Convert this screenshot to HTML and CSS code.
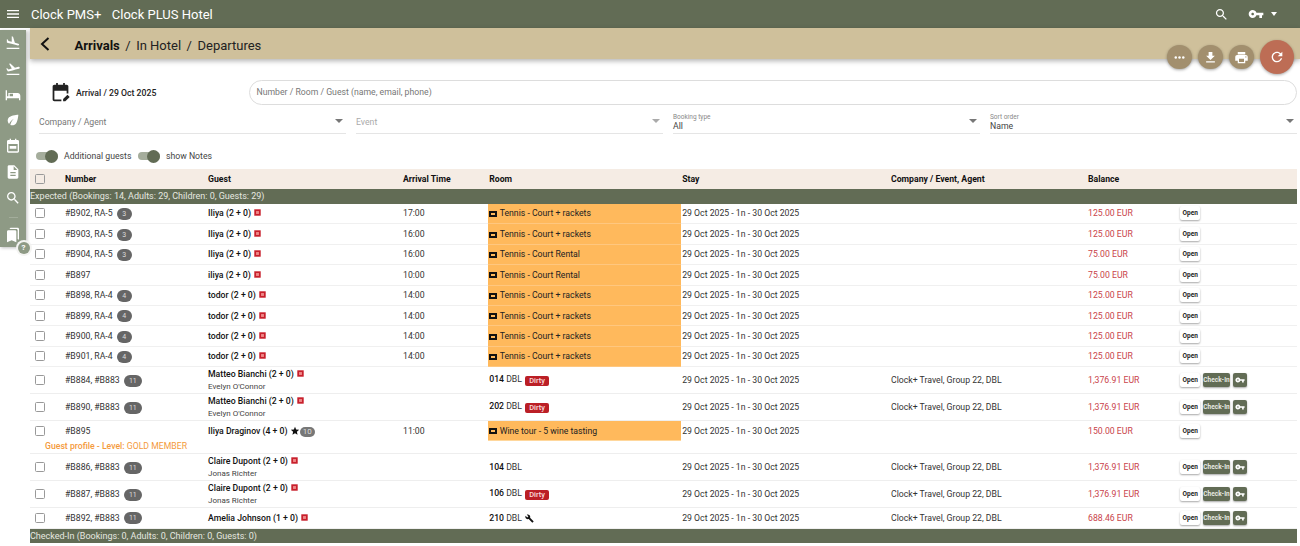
FILE: index.html
```html
<!DOCTYPE html>
<html lang="en">
<head>
<meta charset="utf-8">
<title>Clock PMS+ Arrivals</title>
<link rel="stylesheet" href="styles.css">
</head>
<body>
<svg class="defs" aria-hidden="true">
  <symbol id="i-takeoff" viewBox="0 0 24 24"><path d="M2.5 19h19v2h-19zm19.57-9.36c-.21-.8-1.04-1.28-1.84-1.06L14.92 10l-6.9-6.43-1.93.51 4.14 7.17-4.97 1.33-1.97-1.54-1.45.39 1.82 3.16.77 1.33 1.6-.43 5.31-1.42 4.35-1.16L21 11.49c.81-.23 1.28-1.05 1.07-1.85z"/></symbol>
  <symbol id="i-land" viewBox="0 0 24 24"><path d="M2.5 19h19v2h-19zm7.18-5.73l4.35 1.16 5.31 1.42c.8.21 1.62-.26 1.84-1.06.21-.8-.26-1.62-1.06-1.84l-5.31-1.42-2.76-9.02L10.12 2v8.28L5.15 8.95l-.93-2.32-1.45-.39v5.17l1.6.43 5.31 1.43z"/></symbol>
  <symbol id="i-bed" viewBox="0 0 24 24"><path d="M1 5h2v9h2V9h14c2.2 0 4 1.8 4 4v7h-2v-3H3v3H1zm6 5v4h5v-4z"/></symbol>
  <symbol id="i-leaf" viewBox="0 0 24 24"><path d="M6.05 8.05c-2.73 2.73-2.73 7.15-.02 9.88 1.47-3.4 4.09-6.24 7.36-7.93-2.77 2.34-4.71 5.61-5.39 9.32 2.6 1.23 5.8.78 7.95-1.37C19.43 14.47 20 4 20 4S9.53 4.57 6.05 8.05z"/></symbol>
  <symbol id="i-cal" viewBox="0 0 24 24"><path d="M7 1h2v2h6V1h2v2h2c1.1 0 2 .9 2 2v15c0 1.1-.9 2-2 2H5c-1.1 0-2-.9-2-2V5c0-1.1.9-2 2-2h2zM5 9v11h14V9zm2 3h10v4H7z"/></symbol>
  <symbol id="i-doc" viewBox="0 0 24 24"><path d="M14 2H6c-1.1 0-1.99.9-1.99 2L4 20c0 1.1.89 2 1.99 2H18c1.1 0 2-.9 2-2V8l-6-6zm2 16H8v-2h8v2zm0-4H8v-2h8v2zm-3-5V3.5L18.5 9H13z"/></symbol>
  <symbol id="i-search" viewBox="0 0 24 24"><path d="M15.5 14h-.79l-.28-.27C15.41 12.59 16 11.11 16 9.5 16 5.91 13.09 3 9.5 3S3 5.91 3 9.5 5.91 16 9.5 16c1.61 0 3.09-.59 4.23-1.57l.27.28v.79l5 4.99L20.49 19l-4.99-5zm-6 0C7.01 14 5 11.99 5 9.5S7.01 5 9.5 5 14 7.01 14 9.5 11.99 14 9.5 14z"/></symbol>
  <symbol id="i-books" viewBox="0 0 24 24"><path d="M19 18l2 1V3c0-1.1-.9-2-2-2H8.99C7.89 1 7 1.9 7 3h10c1.1 0 2 .9 2 2v13zM15 5H5c-1.1 0-2 .9-2 2v16l7-3 7 3V7c0-1.1-.9-2-2-2z"/></symbol>
  <symbol id="i-key" viewBox="0 0 24 24"><path d="M12.65 10C11.83 7.67 9.61 6 7 6c-3.31 0-6 2.69-6 6s2.69 6 6 6c2.61 0 4.83-1.67 5.65-4H17v4h4v-4h2v-4H12.65zM7 14c-1.1 0-2-.9-2-2s.9-2 2-2 2 .9 2 2-.9 2-2 2z"/></symbol>
  <symbol id="i-ticket" viewBox="0 0 24 24"><path fill-rule="evenodd" d="M0 3h24v18H0zM6 9v6h12V9z"/></symbol>
  <symbol id="i-note" viewBox="0 0 24 24"><path fill="#c8202c" d="M1 1h22v22H1z"/><path fill="#e88" d="M7 7h10v10H7z"/></symbol>
</svg>

<header class="topbar">
  <svg class="menu" viewBox="0 0 24 24"><path d="M3 18h18v-2H3zm0-5h18v-2H3zm0-7v2h18V6z"/></svg>
  <span class="brand">Clock PMS+</span>
  <span class="hotel">Clock PLUS Hotel</span>
  <svg class="top-search"><use href="#i-search"/></svg>
  <svg class="top-key"><use href="#i-key"/></svg>
  <span class="caret caret-top"></span>
</header>

<div class="shell">
  <nav class="rail">
    <svg class="rail-icon"><use href="#i-land"/></svg>
    <svg class="rail-icon"><use href="#i-takeoff"/></svg>
    <svg class="rail-icon"><use href="#i-bed"/></svg>
    <svg class="rail-icon"><use href="#i-leaf"/></svg>
    <svg class="rail-icon"><use href="#i-cal"/></svg>
    <svg class="rail-icon"><use href="#i-doc"/></svg>
    <svg class="rail-icon"><use href="#i-search"/></svg>
    <span class="rail-sep"></span>
    <svg class="rail-icon"><use href="#i-books"/></svg>
    <span class="help"><span class="help-in">?</span></span>
  </nav>

  <main class="main">
    <div class="band">
      <svg class="back" viewBox="0 0 24 24"><path d="M15.5 6l-6.500 6 6.500 6"/></svg>
      <span class="crumb crumb-active">Arrivals</span>
      <span class="crumb-sep">/</span>
      <span class="crumb">In Hotel</span>
      <span class="crumb-sep">/</span>
      <span class="crumb">Departures</span>
    </div>

    <div class="fabs">
      <span class="fab"><svg viewBox="0 0 24 24"><circle cx="6" cy="12" r="2"/><circle cx="12" cy="12" r="2"/><circle cx="18" cy="12" r="2"/></svg></span>
      <span class="fab"><svg viewBox="0 0 24 24"><path d="M19 9h-4V3H9v6H5l7 7 7-7zM5 18v2h14v-2H5z"/></svg></span>
      <span class="fab"><svg viewBox="0 0 24 24"><path d="M19 8H5c-1.660 0-3 1.340-3 3v6h4v4h12v-4h4v-6c0-1.660-1.340-3-3-3zm-3 11H8v-5h8v5zm3-7c-.55 0-1-.45-1-1s.45-1 1-1 1 .45 1 1-.45 1-1 1zm-1-9H6v4h12V3z"/></svg></span>
      <span class="fab fab-main"><svg viewBox="0 0 24 24"><path d="M17.650 6.350C16.200 4.900 14.210 4 12 4c-4.420 0-7.990 3.580-7.990 8s3.570 8 7.990 8c3.730 0 6.840-2.550 7.730-6h-2.080c-.82 2.330-3.040 4-5.650 4-3.310 0-6-2.690-6-6s2.690-6 6-6c1.660 0 3.140.69 4.220 1.780L13 11h7V4l-2.350 2.350z"/></svg></span>
    </div>

    <div class="daterow">
      <svg class="cal-edit" viewBox="0 0 24 24"><path d="M7 1h2v2h6V1h2v2h2c1.100 0 2 .9 2 2v8h-2v-3H5v10h8v2H5c-1.100 0-2-.9-2-2V5c0-1.100.9-2 2-2h2z"/><path d="M15 19.500V22h2.500l5-5-2.500-2.500z"/></svg>
      <span class="date-label">Arrival / 29 Oct 2025</span>
      <div class="searchbox">Number / Room / Guest (name, email, phone)</div>
    </div>

    <div class="filters">
      <div class="select"><span class="sel-ph">Company / Agent</span><span class="caret"></span></div>
      <div class="select"><span class="sel-ph sel-dim">Event</span><span class="caret caret-dim"></span></div>
      <div class="select"><span class="sel-stack"><span class="sel-label">Booking type</span><span class="sel-val">All</span></span><span class="caret"></span></div>
      <div class="select"><span class="sel-stack"><span class="sel-label">Sort order</span><span class="sel-val">Name</span></span><span class="caret"></span></div>
    </div>

    <div class="toggles">
      <span class="toggle"><span class="knob"></span></span><span class="tg-label tg-first">Additional guests</span>
      <span class="toggle"><span class="knob"></span></span><span class="tg-label">show Notes</span>
    </div>

    <table class="grid">
      <colgroup>
        <col class="c-check"><col class="c-num"><col class="c-guest"><col class="c-time"><col class="c-room"><col class="c-stay"><col class="c-comp"><col class="c-bal"><col class="c-act">
      </colgroup>
      <thead>
        <tr>
          <th><span class="cb"></span></th><th>Number</th><th>Guest</th><th>Arrival Time</th><th>Room</th><th>Stay</th><th>Company / Event, Agent</th><th>Balance</th><th></th>
        </tr>
      </thead>
      <tbody>
        <tr class="group"><td colspan="9">Expected (Bookings: 14, Adults: 29, Children: 0, Guests: 29)</td></tr>

        <tr class="r"><td><span class="cb"></span></td><td>#B902, RA-5 <span class="pill">3</span></td><td><b>Iliya (2 + 0)</b> <svg class="note"><use href="#i-note"/></svg></td><td>17:00</td><td class="ex"><svg class="tk"><use href="#i-ticket"/></svg>Tennis - Court + rackets</td><td>29 Oct 2025 - 1n - 30 Oct 2025</td><td></td><td class="bal">125.00 EUR</td><td><span class="btn">Open</span></td></tr>
        <tr class="r"><td><span class="cb"></span></td><td>#B903, RA-5 <span class="pill">3</span></td><td><b>Iliya (2 + 0)</b> <svg class="note"><use href="#i-note"/></svg></td><td>16:00</td><td class="ex"><svg class="tk"><use href="#i-ticket"/></svg>Tennis - Court + rackets</td><td>29 Oct 2025 - 1n - 30 Oct 2025</td><td></td><td class="bal">125.00 EUR</td><td><span class="btn">Open</span></td></tr>
        <tr class="r"><td><span class="cb"></span></td><td>#B904, RA-5 <span class="pill">3</span></td><td><b>Iliya (2 + 0)</b> <svg class="note"><use href="#i-note"/></svg></td><td>16:00</td><td class="ex"><svg class="tk"><use href="#i-ticket"/></svg>Tennis - Court Rental</td><td>29 Oct 2025 - 1n - 30 Oct 2025</td><td></td><td class="bal">75.00 EUR</td><td><span class="btn">Open</span></td></tr>
        <tr class="r"><td><span class="cb"></span></td><td>#B897</td><td><b>iliya (2 + 0)</b> <svg class="note"><use href="#i-note"/></svg></td><td>10:00</td><td class="ex"><svg class="tk"><use href="#i-ticket"/></svg>Tennis - Court Rental</td><td>29 Oct 2025 - 1n - 30 Oct 2025</td><td></td><td class="bal">75.00 EUR</td><td><span class="btn">Open</span></td></tr>
        <tr class="r"><td><span class="cb"></span></td><td>#B898, RA-4 <span class="pill">4</span></td><td><b>todor (2 + 0)</b> <svg class="note"><use href="#i-note"/></svg></td><td>14:00</td><td class="ex"><svg class="tk"><use href="#i-ticket"/></svg>Tennis - Court + rackets</td><td>29 Oct 2025 - 1n - 30 Oct 2025</td><td></td><td class="bal">125.00 EUR</td><td><span class="btn">Open</span></td></tr>
        <tr class="r"><td><span class="cb"></span></td><td>#B899, RA-4 <span class="pill">4</span></td><td><b>todor (2 + 0)</b> <svg class="note"><use href="#i-note"/></svg></td><td>14:00</td><td class="ex"><svg class="tk"><use href="#i-ticket"/></svg>Tennis - Court + rackets</td><td>29 Oct 2025 - 1n - 30 Oct 2025</td><td></td><td class="bal">125.00 EUR</td><td><span class="btn">Open</span></td></tr>
        <tr class="r"><td><span class="cb"></span></td><td>#B900, RA-4 <span class="pill">4</span></td><td><b>todor (2 + 0)</b> <svg class="note"><use href="#i-note"/></svg></td><td>14:00</td><td class="ex"><svg class="tk"><use href="#i-ticket"/></svg>Tennis - Court + rackets</td><td>29 Oct 2025 - 1n - 30 Oct 2025</td><td></td><td class="bal">125.00 EUR</td><td><span class="btn">Open</span></td></tr>
        <tr class="r"><td><span class="cb"></span></td><td>#B901, RA-4 <span class="pill">4</span></td><td><b>todor (2 + 0)</b> <svg class="note"><use href="#i-note"/></svg></td><td>14:00</td><td class="ex"><svg class="tk"><use href="#i-ticket"/></svg>Tennis - Court + rackets</td><td>29 Oct 2025 - 1n - 30 Oct 2025</td><td></td><td class="bal">125.00 EUR</td><td><span class="btn">Open</span></td></tr>

        <tr class="r2"><td><span class="cb"></span></td><td>#B884, #B883 <span class="pill pill-w">11</span></td><td><b>Matteo Bianchi (2 + 0)</b> <svg class="note"><use href="#i-note"/></svg><div class="sub">Evelyn O'Connor</div></td><td></td><td><b>014</b> DBL <span class="dirty">Dirty</span></td><td>29 Oct 2025 - 1n - 30 Oct 2025</td><td>Clock+ Travel, Group 22, DBL</td><td class="bal">1,376.91 EUR</td><td><span class="btn">Open</span><span class="btn btn-g">Check-In</span><span class="btn btn-g btn-k"><svg><use href="#i-key"/></svg></span></td></tr>
        <tr class="r2"><td><span class="cb"></span></td><td>#B890, #B883 <span class="pill pill-w">11</span></td><td><b>Matteo Bianchi (2 + 0)</b> <svg class="note"><use href="#i-note"/></svg><div class="sub">Evelyn O'Connor</div></td><td></td><td><b>202</b> DBL <span class="dirty">Dirty</span></td><td>29 Oct 2025 - 1n - 30 Oct 2025</td><td>Clock+ Travel, Group 22, DBL</td><td class="bal">1,376.91 EUR</td><td><span class="btn">Open</span><span class="btn btn-g">Check-In</span><span class="btn btn-g btn-k"><svg><use href="#i-key"/></svg></span></td></tr>

        <tr class="r-top"><td><span class="cb"></span></td><td>#B895</td><td><b>Iliya Draginov (4 + 0)</b> <svg class="star" viewBox="0 0 24 24"><path d="M12 17.270L18.180 21l-1.640-7.030L22 9.240l-7.190-.61L12 2 9.190 8.630 2 9.240l5.460 4.730L5.820 21z"/></svg><span class="pill pill-s">10</span></td><td>11:00</td><td class="ex"><svg class="tk"><use href="#i-ticket"/></svg>Wine tour - 5 wine tasting</td><td>29 Oct 2025 - 1n - 30 Oct 2025</td><td></td><td class="bal">150.00 EUR</td><td><span class="btn">Open</span></td></tr>
        <tr class="r-profile"><td colspan="9"><strong>Guest profile - Level:</strong> GOLD MEMBER</td></tr>

        <tr class="r2"><td><span class="cb"></span></td><td>#B886, #B883 <span class="pill pill-w">11</span></td><td><b>Claire Dupont (2 + 0)</b> <svg class="note"><use href="#i-note"/></svg><div class="sub">Jonas Richter</div></td><td></td><td><b>104</b> DBL</td><td>29 Oct 2025 - 1n - 30 Oct 2025</td><td>Clock+ Travel, Group 22, DBL</td><td class="bal">1,376.91 EUR</td><td><span class="btn">Open</span><span class="btn btn-g">Check-In</span><span class="btn btn-g btn-k"><svg><use href="#i-key"/></svg></span></td></tr>
        <tr class="r2"><td><span class="cb"></span></td><td>#B887, #B883 <span class="pill pill-w">11</span></td><td><b>Claire Dupont (2 + 0)</b> <svg class="note"><use href="#i-note"/></svg><div class="sub">Jonas Richter</div></td><td></td><td><b>106</b> DBL <span class="dirty">Dirty</span></td><td>29 Oct 2025 - 1n - 30 Oct 2025</td><td>Clock+ Travel, Group 22, DBL</td><td class="bal">1,376.91 EUR</td><td><span class="btn">Open</span><span class="btn btn-g">Check-In</span><span class="btn btn-g btn-k"><svg><use href="#i-key"/></svg></span></td></tr>
        <tr class="r"><td><span class="cb"></span></td><td>#B892, #B883 <span class="pill pill-w">11</span></td><td><b>Amelia Johnson (1 + 0)</b> <svg class="note"><use href="#i-note"/></svg></td><td></td><td><b>210</b> DBL <svg class="wrench" viewBox="0 0 24 24"><path d="M22.700 19l-9.100-9.100c.9-2.300.4-5-1.500-6.900-2-2-5-2.400-7.400-1.300L9 6 6 9 1.600 4.700C.4 7.100.9 10.100 2.900 12.100c1.900 1.900 4.600 2.400 6.900 1.500l9.100 9.100c.4.4 1 .4 1.400 0l2.300-2.300c.5-.4.5-1.100.1-1.400z"/></svg></td><td>29 Oct 2025 - 1n - 30 Oct 2025</td><td>Clock+ Travel, Group 22, DBL</td><td class="bal">688.46 EUR</td><td><span class="btn">Open</span><span class="btn btn-g">Check-In</span><span class="btn btn-g btn-k"><svg><use href="#i-key"/></svg></span></td></tr>

        <tr class="group"><td colspan="9">Checked-In (Bookings: 0, Adults: 0, Children: 0, Guests: 0)</td></tr>
      </tbody>
    </table>
  </main>
</div>
</body>
</html>
```
FILE: styles.css
```css
* { box-sizing: border-box; }
html, body { margin: 0; height: 546px; overflow: hidden; background: #fff; }
body { font-family: Roboto, "Liberation Sans", sans-serif; font-size: 8.700px; color: #333; }
.defs { width: 0; height: 0; position: absolute; }

/* top bar */
.topbar { height: 28px; background: #626c55; display: flex; align-items: center; color: #fff; padding-right: 23px; }
.topbar svg { fill: #fff; }
.menu { width: 16px; height: 16px; margin-left: 5px; }
.brand { font-size: 13px; margin-left: 10px; }
.hotel { font-size: 13px; margin-left: 10.500px; flex: 1; }
.top-search { width: 15px; height: 15px; margin-right: 19px; }
.top-key { width: 16px; height: 16px; margin-right: 7px; }
.caret { width: 0; height: 0; border-left: 4px solid transparent; border-right: 4px solid transparent; border-top: 4px solid #777; }
.caret-top { border-top-color: #fff; border-left-width: 3.500px; border-right-width: 3.500px; }
.caret-dim { border-top-color: #aaa; }

/* shell */
.shell { display: flex; align-items: flex-start; height: 518px; }
.rail { position: relative; width: 26px; height: 217px; margin-top: 2px; background: #8e9a85; display: flex; flex-direction: column; align-items: center; padding-top: 5px; box-shadow: 1px 1px 3px rgba(0,0,0,.25); flex: none; }
.rail-icon { width: 16px; height: 16px; fill: #fff; margin-bottom: 9.800px; flex: none; }
.rail-sep { width: 9px; height: 1px; background: #a3ad9b; margin: 1px 0 9px; flex: none; }
.help { position: absolute; left: 15.500px; top: 210px; width: 16px; height: 16px; border-radius: 50%; background: #f4f4f2; display: flex; align-items: center; justify-content: center; }
.help-in { width: 12px; height: 12px; border-radius: 50%; background: #8e9a85; color: #fff; font-size: 8px; font-weight: 700; text-align: center; line-height: 12px; }

.main { position: relative; flex: 1; margin-left: 4px; min-width: 0; }
.band { height: 31px; background: #cfc09b; display: flex; align-items: center; box-shadow: 0 2px 5px rgba(0,0,0,.3); font-size: 13px; color: #222; padding-left: 44.500px; padding-top: 3px; }
.back { position: absolute; left: 3px; top: 4px; width: 24px; height: 24px; fill: none; stroke: #111; stroke-width: 2; }
.crumb-active { font-weight: 700; color: #111; }
.crumb-sep { margin: 0 5.500px; }

.fabs { position: absolute; right: 6px; top: 12px; display: flex; align-items: center; gap: 6.500px; }
.fab { width: 24.500px; height: 24.500px; border-radius: 50%; background: #a28f6e; display: flex; align-items: center; justify-content: center; box-shadow: 0 1px 3px rgba(0,0,0,.35); }
.fab svg { width: 15px; height: 15px; fill: #fff; }
.fab-main { width: 34px; height: 34px; background: #bd6d55; }
.fab-main svg { width: 16px; height: 16px; margin-top: -1px; }

.daterow { display: flex; align-items: center; height: 25px; margin: 21px 3px 0 20px; }
.cal-edit { width: 21px; height: 21px; fill: #222; flex: none; }
.date-label { width: 173px; margin-left: 5px; font-weight: 500; color: #222; flex: none; }
.searchbox { flex: 1; height: 25px; border: 1px solid #ddd; border-radius: 13px; line-height: 22px; padding-left: 6.500px; color: #777; }

.filters { display: grid; grid-template-columns: repeat(4, 1fr); column-gap: 10px; margin: 4px 3px 0 9px; }
.select { height: 25px; border-bottom: 1.500px solid #e5e5e5; display: flex; align-items: center; justify-content: space-between; padding-right: 3px; }
.sel-ph { color: #777; padding-top: 2px; }
.sel-dim { color: #aaa; }
.sel-stack { display: flex; flex-direction: column; padding-top: 1px; }
.sel-label { font-size: 6.500px; line-height: 8px; color: #888; }
.sel-val { line-height: 10px; color: #444; }

.toggles { display: flex; align-items: center; height: 14px; margin: 15px 0 6px 6px; color: #444; }
.toggle { position: relative; width: 22px; height: 8px; border-radius: 4px; background: #a5ad9c; flex: none; }
.knob { position: absolute; right: 0; top: -2.500px; width: 13px; height: 13px; border-radius: 50%; background: #626c55; }
.tg-label { margin-left: 6px; }
.tg-first { width: 74px; }

/* table */
.grid { width: 1267px; table-layout: fixed; border-collapse: collapse; }
.c-check { width: 35px; } .c-num { width: 143px; } .c-guest { width: 195px; } .c-time { width: 85px; }
.c-room { width: 193px; } .c-stay { width: 210px; } .c-comp { width: 197px; } .c-bal { width: 92px; } .c-act { width: 117px; }
.grid th { height: 20px; background: #f5ece4; text-align: left; font-weight: 700; color: #111; padding: 0 0 1px; }
.grid td { padding: 0; vertical-align: middle; }
.grid th:nth-child(5), .grid th:nth-child(6), .grid td:nth-child(5), .grid td:nth-child(6) { padding-left: 1.200px; }
.group td { height: 14.500px; background: #626c55; color: #e6e8e0; line-height: 14px; font-size: 9px; }
.r td { height: 20.400px; border-bottom: 1px solid #f0f0f0; }
.r2 td { height: 27px; border-bottom: 1px solid #eee; }
.r-top td { height: 20px; }
.r-profile td { height: 13px; padding-left: 15px; color: #f49a3c; border-bottom: 1px solid #eee; vertical-align: top; }
.r-profile strong { font-weight: 500; }
.grid b { color: #111; font-weight: 500; }
.cb { display: block; width: 10px; height: 10px; border: 1px solid #999; border-radius: 1.500px; margin-left: 4.500px; background: #fff; }
th .cb { background: transparent; }
.pill { display: inline-block; min-width: 15px; height: 12px; border-radius: 6px; background: #666; color: #ddd; font-size: 7px; line-height: 12px; text-align: center; margin: -3px 0 -3px 2px; vertical-align: 0.500px; }
.pill-w { min-width: 18px; }
.pill-s { margin-left: 0; height: 10px; line-height: 10px; background: #777; font-size: 8px; vertical-align: 0; }
.note { width: 7px; height: 7px; vertical-align: 0; margin-left: 1px; }
.sub { font-size: 8px; color: #444; margin-top: 3px; line-height: 9px; }
.star { width: 10px; height: 10px; fill: #111; vertical-align: -2px; margin-left: 0; }
.grid .ex { background: #ffb95c; border-bottom: 1px solid #ffc77f; color: #222; }
.r-top .ex { border-bottom: 1px solid #ffd79c; }
.tk { width: 8px; height: 8px; fill: #111; margin: 0 2.500px 0 0; vertical-align: -1.500px; }
.dirty { display: inline-block; height: 10px; padding: 0 4px; background: #bb1f26; color: #fbdcdc; font-size: 7.500px; line-height: 10px; border-radius: 2px; font-weight: 500; margin-left: 1px; vertical-align: -1px; }
.wrench { width: 9px; height: 9px; fill: #111; vertical-align: -2px; margin-left: 1px; }
.bal { color: #c9434a; }
.btn { display: inline-flex; align-items: center; justify-content: center; height: 14px; padding: 0 2.500px; background: #fff; color: #222; font-size: 6.500px; font-weight: 700; border-radius: 2px; box-shadow: 0 1px 2px rgba(0,0,0,.35); margin-right: 2.500px; vertical-align: middle; white-space: nowrap; }
.btn-g { background: #626c55; color: #e6e8e0; padding: 0; width: 27.500px; margin-right: 3px; }
.btn-k { width: 14px; margin-right: 0; padding: 0; }
.btn-k svg { width: 10px; height: 10px; fill: #fff; }
```
